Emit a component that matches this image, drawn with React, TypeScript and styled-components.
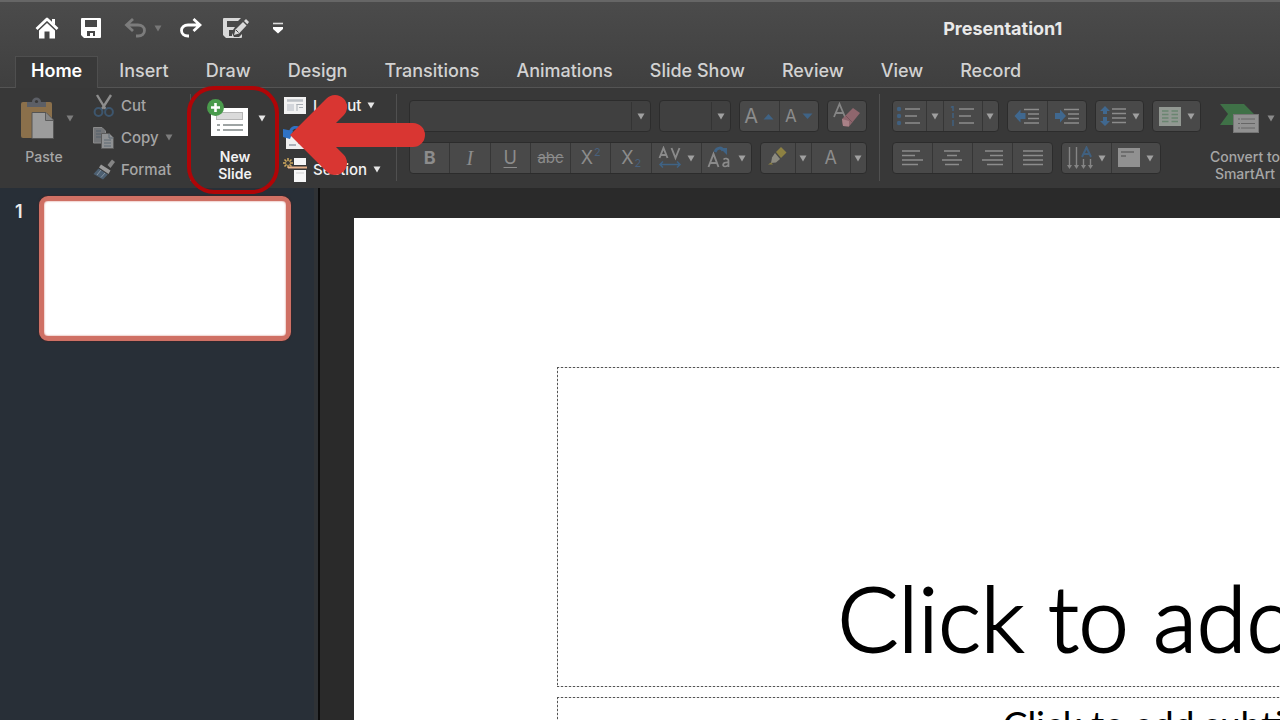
import React from "react";
import styled, { createGlobalStyle, css } from "styled-components";

const GlobalStyle = createGlobalStyle`
  * { box-sizing: border-box; }
  html, body, #root { height: 100%; }
  body {
    margin: 0;
    overflow: hidden;
    background: #2a2a2a;
    font-family: Inter, Roboto, "Liberation Sans", sans-serif;
  }
  button, select { font: inherit; color: inherit; }
`;

const Window = styled.div`
  position: relative;
  display: flex;
  flex-direction: column;
  height: 100%;
  overflow: hidden;
`;

const Header = styled.header`
  flex: none;
  background: linear-gradient(#4b4b4b, #3f3f3f);
  border-top: 2px solid #666;
`;

const TitleBar = styled.div`
  display: grid;
  grid-template-columns: 14fr 5fr;
  align-items: center;
  height: 54px;
`;

const QuickAccess = styled.div`
  display: flex;
  align-items: center;
  padding-left: 35px;
`;

const QuickButton = styled.button<{ $gap?: number }>`
  display: flex;
  padding: 0 0 2px;
  border: 0;
  background: none;
  margin-right: ${(p) => p.$gap ?? 0}px;
`;

const DocTitle = styled.h1`
  margin: 0;
  font-size: 18px;
  line-height: 24px;
  font-weight: 700;
  color: #e9e9e9;
  white-space: nowrap;
`;

const Tabs = styled.nav`
  display: flex;
  gap: 5px;
  height: 32px;
  padding-left: 15px;
  border-bottom: 1px solid #545454;
`;

const Tab = styled.a<{ $active?: boolean }>`
  height: 32px;
  padding: 0 15px;
  border: 1px solid transparent;
  border-bottom: 0;
  font-size: 18px;
  line-height: 28px;
  font-weight: 500;
  color: #d2d2d2;
  text-decoration: none;
  white-space: nowrap;
  ${(p) =>
    p.$active &&
    css`
      font-weight: 600;
      color: #fff;
      background: #393939;
      border-color: #4f4f4f;
    `}
`;

const Ribbon = styled.div`
  flex: none;
  display: flex;
  height: 100px;
  padding-left: 20px;
  background: #383838;
  overflow: hidden;
`;

const Separator = styled.div`
  flex: none;
  width: 1px;
  margin: 6px 12px 7px;
  background: #505050;
`;

const BigButton = styled.button<{ $bright?: boolean; $indent?: number }>`
  flex: none;
  display: flex;
  flex-direction: column;
  padding: 8px 0 0;
  border: 0;
  background: none;
  font-weight: ${(p) => (p.$bright ? 600 : 500)};
  color: ${(p) => (p.$bright ? "#f2f2f2" : "#a6a6a6")};
`;

const BigIcon = styled.span<{ $gap: number; $indent?: number }>`
  display: flex;
  align-items: center;
  gap: ${(p) => p.$gap}px;
  height: 44px;
  margin-bottom: 8px;
  padding-left: ${(p) => p.$indent ?? 0}px;
`;

const BigLabel = styled.span<{ $width: number }>`
  width: ${(p) => p.$width}px;
  font-size: 14px;
  line-height: 17px;
  text-align: center;
  white-space: nowrap;
`;

const Group = styled.div<{ $width: number; $left: number }>`
  flex: none;
  display: flex;
  flex-direction: column;
  width: ${(p) => p.$width}px;
  margin-left: ${(p) => p.$left}px;
`;

const Command = styled.button<{ $bright?: boolean }>`
  display: flex;
  align-items: center;
  gap: 6px;
  height: 32px;
  padding: 3px 0 0;
  border: 0;
  background: none;
  font-size: 15px;
  line-height: 18px;
  font-weight: 500;
  color: ${(p) => (p.$bright ? "#f2f2f2" : "#a6a6a6")};
`;

const ControlRows = styled.div`
  flex: none;
  display: flex;
  flex-direction: column;
  gap: 10px;
  padding-top: 12px;
`;

const ControlRow = styled.div`
  display: flex;
  gap: 8px;
`;

const Segments = styled.div<{ $width: number }>`
  display: flex;
  width: ${(p) => p.$width}px;
  height: 32px;
  border: 1px solid #2c2c2c;
  border-radius: 4px;
  background: #494949;
  overflow: hidden;
`;

const Cell = styled.button<{ $grow: number; $divided?: boolean }>`
  flex: ${(p) => p.$grow} 1 0;
  min-width: 0;
  display: flex;
  align-items: center;
  justify-content: center;
  gap: 5px;
  padding: 0;
  border: 0;
  border-left: ${(p) => (p.$divided ? "1px solid #363636" : "0")};
  background: none;
  color: #8c8c8c;
`;

const Combo = styled.label<{ $width: number }>`
  display: flex;
  align-items: center;
  width: ${(p) => p.$width}px;
  height: 32px;
  padding-right: 5px;
  border: 1px solid #2c2c2c;
  border-radius: 4px;
  background: #404040;
`;

const ComboSelect = styled.select`
  flex: 1;
  min-width: 0;
  height: 28px;
  margin-right: 5px;
  border: 0;
  border-right: 1px solid #343434;
  appearance: none;
  background: none;
`;

const Glyph = styled.span<{ $size?: number; $kind?: "bold" | "italic" | "underline" | "strike" }>`
  font-size: ${(p) => p.$size ?? 18}px;
  line-height: 22px;
  ${(p) => p.$kind === "bold" && "font-weight: 700;"}
  ${(p) => p.$kind === "italic" && 'font-family: "Liberation Serif", serif; font-style: italic; font-size: 20px;'}
  ${(p) => p.$kind === "underline" && "text-decoration: underline; text-underline-offset: 3px;"}
  ${(p) => p.$kind === "strike" && "text-decoration: line-through;"}
`;

const Script = styled.span<{ $up?: boolean }>`
  align-self: ${(p) => (p.$up ? "flex-start" : "flex-end")};
  margin-left: -4px;
  padding: 3px 0;
  font-size: 11px;
  line-height: 13px;
  color: #48607c;
`;

const Workspace = styled.main`
  flex: 1;
  min-height: 0;
  display: flex;
`;

const SlideList = styled.aside`
  flex: none;
  display: flex;
  align-items: flex-start;
  gap: 14px;
  width: 320px;
  padding: 8px 0 0 15px;
  background: #282f37;
  border-right: 2px solid #0c0c0c;
  box-shadow: inset -4px 0 0 #2f3235;
`;

const SlideNumber = styled.span`
  width: 10px;
  padding-top: 5px;
  font-size: 18px;
  line-height: 22px;
  font-weight: 600;
  color: #ececec;
`;

const Thumbnail = styled.button`
  width: 252px;
  height: 145px;
  padding: 0;
  border: 5px solid #cf7064;
  border-radius: 9px;
  background: #fff;
  box-shadow: 0 0 2px #4b1d1c, inset 0 0 2px #cf7064;
`;

const Canvas = styled.section`
  flex: 1;
  min-width: 0;
  padding: 30px 0 0 34px;
  background: #2a2a2a;
  overflow: hidden;
`;

const Slide = styled.div`
  display: flex;
  flex-direction: column;
  gap: 10px;
  width: 1626px;
  height: 915px;
  padding: 149px 203px 0;
  background: #fff;
  color: #000;
  font-family: Lato, "Open Sans", sans-serif;
  text-align: center;
`;

const dashes = css`
  background:
    repeating-linear-gradient(90deg, #555 0 2px, #ddd 2px 4px) top / 100% 1px no-repeat,
    repeating-linear-gradient(90deg, #555 0 2px, #ddd 2px 4px) bottom / 100% 1px no-repeat,
    repeating-linear-gradient(#555 0 2px, #ddd 2px 4px) left / 1px 100% no-repeat,
    repeating-linear-gradient(#555 0 2px, #ddd 2px 4px) right / 1px 100% no-repeat;
`;

const TitleBox = styled.div`
  ${dashes}
  display: flex;
  align-items: flex-end;
  justify-content: center;
  height: 320px;
  padding: 0 26px 14px 0;
  font-size: 90px;
  line-height: 112px;
  font-weight: 300;
  -webkit-text-stroke: 2px #000;
`;

const SubtitleBox = styled.div`
  ${dashes}
  height: 221px;
  padding: 5px 6px 0 0;
  font-size: 37px;
  line-height: 44px;
`;

const Ring = styled.span`
  position: absolute;
  top: 86px;
  left: 187px;
  width: 92px;
  height: 108px;
  border: 4px solid #b00507;
  border-radius: 27px;
  pointer-events: none;
  z-index: 2;
`;

const ArrowOverlay = styled.svg`
  position: absolute;
  top: 92px;
  left: 284px;
  pointer-events: none;
  z-index: 3;
`;

const Svg = ({ w, h, children }: { w: number; h: number; children: React.ReactNode }) => (
  <svg width={w} height={h} viewBox={`0 0 ${w} ${h}`} fill="none" aria-hidden="true">
    {children}
  </svg>
);

const Caret = ({ color = "#a0a0a0" }: { color?: string }) => (
  <Svg w={8} h={7}>
    <path d="M0.5 0.5H7.5L4 6.5Z" fill={color} />
  </Svg>
);

const HomeIcon = () => (
  <Svg w={24} h={24}>
    <path d="M1.500 13 12 3 22.500 13" stroke="#fff" strokeWidth="2.800" strokeLinejoin="round" />
    <path d="M4 14.500 12 7 20 14.500V22.500H14.500V15.500H9.500V22.500H4Z" fill="#fff" />
    <path d="M17 3H20V9L17 6.500Z" fill="#fff" />
  </Svg>
);

const SaveIcon = () => (
  <Svg w={22} h={22}>
    <path
      fillRule="evenodd"
      d="M2 1H20Q21 1 21 2V20Q21 21 20 21H4L1 18V2Q1 1 2 1ZM5 3V10H17V3ZM7 14V19H10V16H13V19H15V14Z"
      fill="#fff"
    />
  </Svg>
);

const UndoIcon = () => (
  <Svg w={22} h={22}>
    <path d="M9 2 2.500 8 9 14M3 8H14C18 8 20.500 10.500 20.500 13.500S18 19 14 19H12" stroke="#7c7c7c" strokeWidth="2.800" />
  </Svg>
);

const RedoIcon = () => (
  <Svg w={22} h={22}>
    <path d="M13.500 2 20 8 13.500 14M19.500 8H8C4 8 1.500 10.500 1.500 13.500S4 19 8 19H9" stroke="#fff" strokeWidth="2.800" />
  </Svg>
);

const SaveEditIcon = () => (
  <Svg w={27} h={22}>
    <path
      fillRule="evenodd"
      d="M2 1H19L16 4H5V10H13L11 13H7V19H10V16L12 20H17L20 17V20Q20 21 19 21H4L1 18V2Q1 1 2 1Z"
      fill="#d8d8d8"
    />
    <path d="M12 18 13.500 12.500 21 5 24.500 8.500 17 16.500Z" fill="#d8d8d8" />
    <path d="M22 4 24 2 27 5 25.300 7.300Z" fill="#d8d8d8" />
    <path d="M14 13 16.500 15.500" stroke="#444" strokeWidth="1" />
  </Svg>
);

const CustomizeIcon = () => (
  <Svg w={12} h={12}>
    <path d="M1 1.500H11" stroke="#ddd" strokeWidth="1.600" />
    <path d="M1 5H11V7L6 11.500 1 7Z" fill="#fff" />
  </Svg>
);

const PasteIcon = () => (
  <Svg w={34} h={42}>
    <rect x="1" y="5" width="31" height="36" rx="2" fill="#8b704b" />
    <path d="M7 5H12C12 -1 21 -1 21 5H26V10H7Z" fill="#5c5f66" />
    <circle cx="16.500" cy="4.500" r="1.600" fill="#383838" />
    <path d="M12 15.500H26L33.500 23V41.500H12Z" fill="#9c9c9c" stroke="#555" />
    <path d="M25.500 16V23.500H33" fill="#858585" stroke="#5c5c5c" />
  </Svg>
);

const CutIcon = () => (
  <Svg w={22} h={24}>
    <path d="M4 1 12.500 15M18 1 9 15" stroke="#8d8d8d" strokeWidth="2.400" />
    <circle cx="5.500" cy="18" r="3.900" stroke="#3d566e" strokeWidth="2" />
    <circle cx="16" cy="18" r="3.900" stroke="#3d566e" strokeWidth="2" />
  </Svg>
);

const CopyIcon = () => (
  <Svg w={22} h={24}>
    <path d="M0.500 1.500H9L12.500 5V17H0.500Z" fill="#737578" stroke="#8a8a8a" />
    <path d="M3 5H8M3 8H8M3 11H8" stroke="#55606b" />
    <path d="M8.500 7.500H16.500L20.500 11.500V22.500H8.500Z" fill="#8f9193" stroke="#5b5b5b" />
    <path d="M16 8V12H20M11 14H18M11 17H18M11 20H18" stroke="#5d6873" />
  </Svg>
);

const FormatIcon = () => (
  <Svg w={22} h={24}>
    <path d="M14.500 7 19 1.500 22 4 17.500 10Z" fill="#858585" />
    <path d="M8 6.500 17.500 12.500 15.500 16 6 9.500Z" fill="#9b9b9b" />
    <path d="M5.500 10.500 14.800 16.500 10 21.500 0.500 16Z" fill="#4d6072" />
    <path d="M4 17 8 12M8 19.500 12 15" stroke="#8693a0" />
  </Svg>
);

const NewSlideIcon = () => (
  <Svg w={42} h={38}>
    <rect x="4" y="9" width="37" height="28" fill="#fff" />
    <rect x="9.500" y="13.500" width="26" height="7" fill="#dadada" stroke="#b5b5b5" />
    <path d="M10 26H13M16 26H36M10 31H13M16 31H36" stroke="#7f8686" strokeWidth="1.500" />
    <circle cx="8.500" cy="8.500" r="8.500" fill="#4a9b4c" />
    <path d="M8.500 4V13M4 8.500H13" stroke="#fff" strokeWidth="2.600" />
  </Svg>
);

const LayoutIcon = () => (
  <Svg w={24} h={20}>
    <rect x="1" y="1" width="22" height="17" fill="#f2f2f2" />
    <path d="M4 4.500H20" stroke="#bcc1c6" strokeWidth="2.500" />
    <rect x="4" y="8" width="7" height="7" fill="#d3d6db" />
    <path d="M13.500 8.500H20M14 8V15M16 11.500H20" stroke="#a9afb5" />
  </Svg>
);

const ResetIcon = () => (
  <Svg w={24} h={24}>
    <rect x="3" y="9" width="20" height="14" fill="#efefef" />
    <path d="M6 19H13M15 17H20" stroke="#aab0b8" strokeWidth="2" />
    <path d="M7 7C9 -1 17 0 18 7" stroke="#2f72c4" strokeWidth="3" />
    <path d="M0 3 10 5 7 13 0 11Z" fill="#2f72c4" />
  </Svg>
);

const SectionIcon = () => (
  <Svg w={24} h={26}>
    <path d="M5 1V11M0 6H10M1.500 2.500 8.500 9.500M8.500 2.500 1.500 9.500" stroke="#cfa95e" strokeWidth="1.500" />
    <circle cx="5" cy="6" r="2" fill="#383838" />
    <rect x="11" y="1" width="12" height="7" fill="#f6f6f6" />
    <path d="M5 10.500H24" stroke="#e9b58e" strokeWidth="2" />
    <rect x="11" y="13" width="12" height="12" fill="#f6f6f6" />
    <path d="M13 16H21" stroke="#cfcfcf" />
  </Svg>
);

const GrowIcon = ({ up }: { up: boolean }) => (
  <Svg w={11} h={7}>
    <path d={up ? "M0.500 6.500H10.500L5.500 1Z" : "M0.500 0.500H10.500L5.500 6Z"} fill="#3f6385" />
  </Svg>
);

const ClearIcon = () => (
  <Svg w={30} h={28}>
    <path d="M2 15 7.500 2 13 15M4 11H11" stroke="#858585" strokeWidth="1.800" />
    <path d="M10 17 21 6 28 11 17 24.500 11 24Z" fill="#8f666d" />
    <path d="M10 17 17 19 17 24.500 11 24Z" fill="#a98187" />
    <path d="M14 14 20 20" stroke="#76525a" />
  </Svg>
);

const SpacingIcon = () => (
  <Svg w={24} h={24}>
    <path d="M1.500 12 5.500 2 9.500 12M3 9H8M13.500 2 17.500 12 21.500 2" stroke="#8a8a8a" strokeWidth="1.900" />
    <path d="M2 18.500H22M5 15.500 2 18.500 5 21.500M19 15.500 22 18.500 19 21.500" stroke="#3f6385" strokeWidth="1.500" />
  </Svg>
);

const CaseIcon = () => (
  <Svg w={26} h={24}>
    <path d="M1.500 21 6.500 8 11.500 21M3.500 17H9.500" stroke="#8a8a8a" strokeWidth="1.900" />
    <path d="M16.500 13.500C18 12 21.500 12 21.500 15V21M21.500 16.500C15 16 15 20.500 18 20.500 20 20.500 21.500 19 21.500 18" stroke="#8a8a8a" strokeWidth="1.700" />
    <path d="M8 6C10 1 15 1 16 5" stroke="#3f6385" strokeWidth="3" />
    <path d="M13 2 20 2V9Z" fill="#3f6385" />
  </Svg>
);

const HighlightIcon = () => (
  <Svg w={22} h={24}>
    <path d="M9 6 14 1 19.500 6.500 14 12Z" fill="#8d8142" />
    <path d="M8 7 13 13 9 16.500 4 17 5 11.500Z" fill="#8d8b80" />
    <path d="M4 16.500 6 18.500H1Z" fill="#8d8142" />
  </Svg>
);

const ListIcon = ({ numbered }: { numbered?: boolean }) => (
  <Svg w={26} h={20}>
    {numbered ? (
      <path d="M3 0V5M3 7V12M3 14V20M1 1.500 3 0" stroke="#40607f" strokeWidth="1.500" />
    ) : (
      <g fill="#40607f">
        <circle cx="3" cy="3" r="2.200" />
        <circle cx="3" cy="10" r="2.200" />
        <circle cx="3" cy="17" r="2.200" />
      </g>
    )}
    <path d="M9 3H24M9 10H21M9 17H24" stroke="#8c8c8c" strokeWidth="1.500" />
  </Svg>
);

const IndentIcon = ({ right }: { right?: boolean }) => (
  <Svg w={26} h={18}>
    <path d={right ? "M12 9 6 2.500V6H1V12H6V15.500Z" : "M0.500 9 6.500 2.500V6H11.500V12H6.500V15.500Z"} fill="#40688f" />
    <path d="M10 2.500H25M14 7H25M14 11.500H25M10 16H25" stroke="#8c8c8c" strokeWidth="1.500" />
  </Svg>
);

const LineSpacingIcon = () => (
  <Svg w={28} h={22}>
    <path d="M6 1 11 6H8V9H4V6H1ZM6 21 11 16H8V12H4V16H1Z" fill="#40688f" />
    <path d="M13 4H27M13 8.500H27M13 13H27M13 17.500H27" stroke="#8c8c8c" strokeWidth="1.500" />
  </Svg>
);

const ColumnsIcon = () => (
  <Svg w={24} h={21}>
    <rect x="1" y="1" width="22" height="19" fill="#929892" />
    <path d="M4 5H10.500M4 8.500H10.500M4 12H10.500M4 15.500H10.500M13.500 5H20M13.500 8.500H20M13.500 12H20M13.500 15.500H20" stroke="#6a8570" strokeWidth="1.600" />
  </Svg>
);

const alignPaths = {
  left: "M1 2H19M1 6.500H14M1 11H22M1 15.500H17",
  center: "M3 2H19M6 6.500H16M1 11H21M4 15.500H18",
  right: "M4 2H22M9 6.500H22M1 11H22M6 15.500H22",
  justify: "M2 2H22M2 6.500H22M2 11H22M2 15.500H22",
};

const AlignIcon = ({ kind }: { kind: keyof typeof alignPaths }) => (
  <Svg w={23} h={18}>
    <path d={alignPaths[kind]} stroke="#8c8c8c" strokeWidth="1.500" />
  </Svg>
);

const DirectionIcon = () => (
  <Svg w={26} h={24}>
    <path d="M2.500 1V21M9.500 1V21M16.500 13V21M23.500 13V21" stroke="#858585" strokeWidth="1.400" />
    <path d="M0 19H5L2.500 23ZM7 19H12L9.500 23ZM14 19H19L16.500 23ZM21 19H26L23.500 23Z" fill="#858585" />
    <path d="M15 11 19.500 1.500 24 11M16.500 8H22.500" stroke="#40607f" strokeWidth="2" />
  </Svg>
);

const AlignTextIcon = () => (
  <Svg w={24} h={20}>
    <rect x="1" y="0" width="22" height="19" fill="#919191" />
    <path d="M4 4H17M4 8H9" stroke="#636363" strokeWidth="1.300" />
  </Svg>
);

const SmartArtIcon = () => (
  <Svg w={40} h={30}>
    <path d="M0 1H24L34 11 24 22H0L8 11Z" fill="#3f7147" />
    <rect x="13.500" y="11.500" width="25" height="18" fill="#919191" stroke="#757575" />
    <path d="M18 16H35M18 20.500H35M18 25H35" stroke="#666" strokeDasharray="2 1 20" />
  </Svg>
);

const tabs = ["Home", "Insert", "Draw", "Design", "Transitions", "Animations", "Slide Show", "Review", "View", "Record"];

export default function App() {
  return (
    <>
      <GlobalStyle />
      <Window>
        <Header>
          <TitleBar>
            <QuickAccess>
              <QuickButton $gap={21} aria-label="Home"><HomeIcon /></QuickButton>
              <QuickButton $gap={22} aria-label="Save"><SaveIcon /></QuickButton>
              <QuickButton $gap={8} aria-label="Undo"><UndoIcon /></QuickButton>
              <QuickButton $gap={18} aria-label="Undo history"><Caret color="#777" /></QuickButton>
              <QuickButton $gap={20} aria-label="Redo"><RedoIcon /></QuickButton>
              <QuickButton $gap={23} aria-label="Save and edit"><SaveEditIcon /></QuickButton>
              <QuickButton aria-label="Customize toolbar"><CustomizeIcon /></QuickButton>
            </QuickAccess>
            <DocTitle>Presentation1</DocTitle>
          </TitleBar>
          <Tabs>
            {tabs.map((t) => (
              <Tab key={t} href="#" $active={t === "Home"}>{t}</Tab>
            ))}
          </Tabs>
        </Header>

        <Ribbon>
          <BigButton>
            <BigIcon $gap={12}><PasteIcon /><Caret color="#7c7c7c" /></BigIcon>
            <BigLabel $width={48}>Paste</BigLabel>
          </BigButton>
          <Group $width={85} $left={19}>
            <Command><CutIcon />Cut</Command>
            <Command><CopyIcon />Copy<Caret color="#7c7c7c" /></Command>
            <Command><FormatIcon />Format</Command>
          </Group>
          <Separator />
          <Group $width={64} $left={4}>
            <BigButton $bright>
              <BigIcon $gap={9}><NewSlideIcon /><Caret color="#e6e6e6" /></BigIcon>
              <BigLabel $width={56}>New<br />Slide</BigLabel>
            </BigButton>
          </Group>
          <Group $width={101} $left={12}>
            <Command $bright><LayoutIcon />Layout<Caret color="#e6e6e6" /></Command>
            <Command $bright><ResetIcon />Reset</Command>
            <Command $bright><SectionIcon />Section<Caret color="#e6e6e6" /></Command>
          </Group>
          <Separator />
          <ControlRows>
            <ControlRow>
              <Combo $width={242}><ComboSelect aria-label="Font" /><Caret /></Combo>
              <Combo $width={72}><ComboSelect aria-label="Font size" /><Caret /></Combo>
              <Segments $width={80}>
                <Cell $grow={1} aria-label="Increase font size"><Glyph $size={20}>A</Glyph><GrowIcon up /></Cell>
                <Cell $grow={1} $divided aria-label="Decrease font size"><Glyph $size={17}>A</Glyph><GrowIcon up={false} /></Cell>
              </Segments>
              <Segments $width={40}>
                <Cell $grow={1} aria-label="Clear formatting"><ClearIcon /></Cell>
              </Segments>
            </ControlRow>
            <ControlRow>
              <Segments $width={343}>
                <Cell $grow={8}><Glyph $kind="bold">B</Glyph></Cell>
                <Cell $grow={8} $divided><Glyph $kind="italic">I</Glyph></Cell>
                <Cell $grow={8} $divided><Glyph $kind="underline">U</Glyph></Cell>
                <Cell $grow={8} $divided><Glyph $size={15} $kind="strike">abc</Glyph></Cell>
                <Cell $grow={8} $divided><Glyph>X</Glyph><Script $up>2</Script></Cell>
                <Cell $grow={8} $divided><Glyph>X</Glyph><Script>2</Script></Cell>
                <Cell $grow={10} $divided aria-label="Character spacing"><SpacingIcon /><Caret /></Cell>
                <Cell $grow={10} $divided aria-label="Change case"><CaseIcon /><Caret /></Cell>
              </Segments>
              <Segments $width={107}>
                <Cell $grow={35} aria-label="Highlight"><HighlightIcon /></Cell>
                <Cell $grow={16} $divided aria-label="Highlight colors"><Caret /></Cell>
                <Cell $grow={39} $divided aria-label="Font color"><Glyph>A</Glyph></Cell>
                <Cell $grow={16} $divided aria-label="Font colors"><Caret /></Cell>
              </Segments>
            </ControlRow>
          </ControlRows>
          <Separator />
          <ControlRows>
            <ControlRow>
              <Segments $width={107}>
                <Cell $grow={34} aria-label="Bullets"><ListIcon /></Cell>
                <Cell $grow={17} $divided aria-label="Bullet styles"><Caret /></Cell>
                <Cell $grow={39} $divided aria-label="Numbering"><ListIcon numbered /></Cell>
                <Cell $grow={16} $divided aria-label="Numbering styles"><Caret /></Cell>
              </Segments>
              <Segments $width={80}>
                <Cell $grow={1} aria-label="Decrease indent"><IndentIcon /></Cell>
                <Cell $grow={1} $divided aria-label="Increase indent"><IndentIcon right /></Cell>
              </Segments>
              <Segments $width={49}>
                <Cell $grow={1} aria-label="Line spacing"><LineSpacingIcon /><Caret /></Cell>
              </Segments>
              <Segments $width={49}>
                <Cell $grow={1} aria-label="Columns"><ColumnsIcon /><Caret /></Cell>
              </Segments>
            </ControlRow>
            <ControlRow>
              <Segments $width={161}>
                <Cell $grow={1} aria-label="Align left"><AlignIcon kind="left" /></Cell>
                <Cell $grow={1} $divided aria-label="Center"><AlignIcon kind="center" /></Cell>
                <Cell $grow={1} $divided aria-label="Align right"><AlignIcon kind="right" /></Cell>
                <Cell $grow={1} $divided aria-label="Justify"><AlignIcon kind="justify" /></Cell>
              </Segments>
              <Segments $width={100}>
                <Cell $grow={1} aria-label="Text direction"><DirectionIcon /><Caret /></Cell>
                <Cell $grow={1} $divided aria-label="Align text"><AlignTextIcon /><Caret /></Cell>
              </Segments>
            </ControlRow>
          </ControlRows>
          <Group $width={84} $left={8}>
            <BigButton>
              <BigIcon $gap={7} $indent={11}><SmartArtIcon /><Caret color="#8a8a8a" /></BigIcon>
              <BigLabel $width={72}>Convert to<br />SmartArt</BigLabel>
            </BigButton>
          </Group>
        </Ribbon>

        <Workspace>
          <SlideList>
            <SlideNumber>1</SlideNumber>
            <Thumbnail aria-label="Slide 1" />
          </SlideList>
          <Canvas>
            <Slide>
              <TitleBox>Click to add title</TitleBox>
              <SubtitleBox>Click to add subtitle</SubtitleBox>
            </Slide>
          </Canvas>
        </Workspace>

        <Ring />
        <ArrowOverlay width="144" height="88" viewBox="284 92 144 88" fill="none" aria-hidden="true">
          <path d="M335 107 307 135 335 163M309 135H413" stroke="#d93632" strokeWidth="24" strokeLinecap="round" strokeMiterlimit="10" />
        </ArrowOverlay>
      </Window>
    </>
  );
}
